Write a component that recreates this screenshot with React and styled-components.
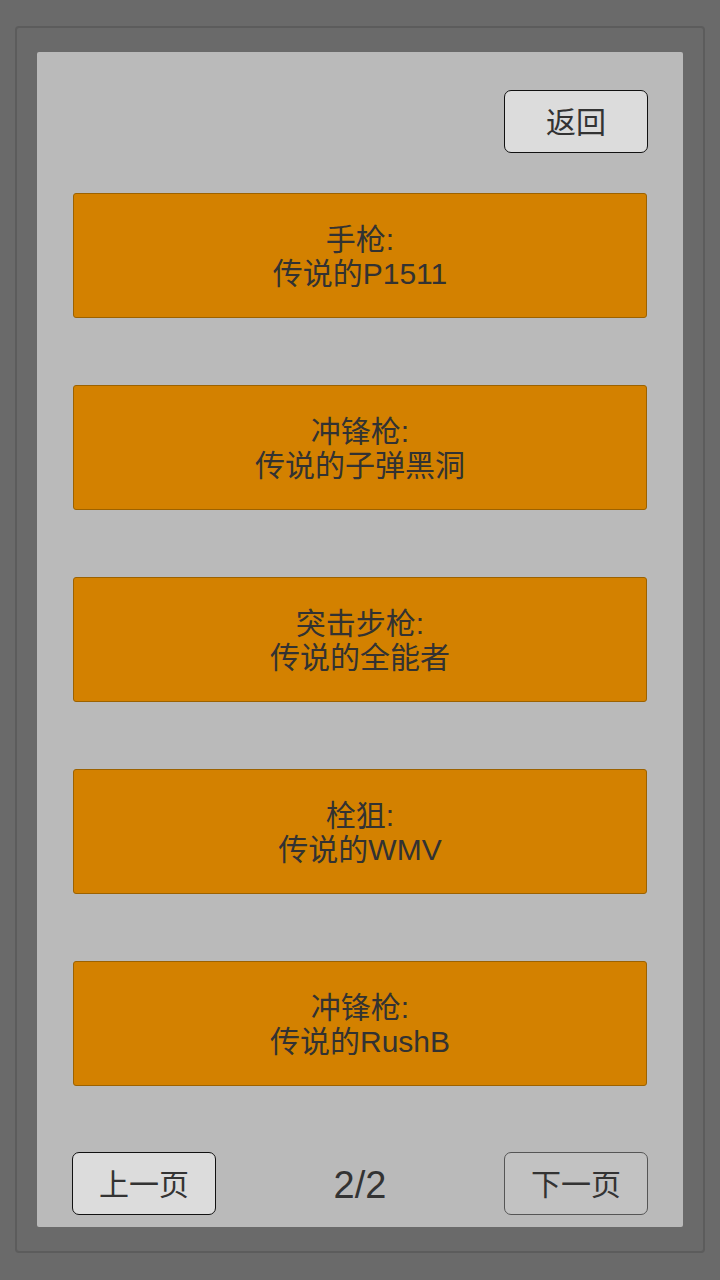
import styled, { createGlobalStyle } from 'styled-components'

const GlobalStyle = createGlobalStyle`
  html, body {
    margin: 0;
    padding: 0;
    background: #6a6a6a;
  }

  body {
    font-family: "Liberation Sans", "Noto Sans CJK SC", sans-serif;
  }
`

const weapons = [
  { type: '手枪:', name: '传说的P1511' },
  { type: '冲锋枪:', name: '传说的子弹黑洞' },
  { type: '突击步枪:', name: '传说的全能者' },
  { type: '栓狙:', name: '传说的WMV' },
  { type: '冲锋枪:', name: '传说的RushB' },
]

function App() {
  return (
    <>
      <GlobalStyle />
      <Screen>
        <Frame>
          <Panel>
            <Header>
              <Button>返回</Button>
            </Header>
            <List>
              {weapons.map((w, i) => (
                <Card key={i}>
                  <span>{w.type}</span>
                  <span>{w.name}</span>
                </Card>
              ))}
            </List>
            <Pager>
              <Button>上一页</Button>
              <PageNum>2/2</PageNum>
              <Button $disabled>下一页</Button>
            </Pager>
          </Panel>
        </Frame>
      </Screen>
    </>
  )
}

const Screen = styled.div`
  width: 720px;
  height: 1280px;
  box-sizing: border-box;
  padding: 26px 15px 27px 15px;
`

const Frame = styled.div`
  height: 100%;
  box-sizing: border-box;
  border: 2px solid #5c5c5c;
  border-radius: 4px;
  background: #6a6a6a;
  padding: 24px 20px 24px 20px;
`

const Panel = styled.div`
  height: 100%;
  box-sizing: border-box;
  background: #bababa;
  border-radius: 2px;
  padding: 38px 35px 12px 35px;
  display: flex;
  flex-direction: column;
`

const Header = styled.div`
  display: flex;
  justify-content: flex-end;
`

const Button = styled.div`
  width: 144px;
  height: 63px;
  box-sizing: border-box;
  padding-bottom: 4px;
  display: flex;
  align-items: center;
  justify-content: center;
  border: 1.5px solid ${p => (p.$disabled ? '#555' : '#111')};
  border-radius: 7px;
  background: ${p => (p.$disabled ? '#c2c2c2' : '#dcdcdc')};
  color: #333;
  font-size: 30px;
`

const List = styled.div`
  display: flex;
  flex-direction: column;
  gap: 67px;
  margin-top: 40px;
  padding: 0 1px;
`

const Card = styled.div`
  height: 125px;
  box-sizing: border-box;
  padding-top: 2px;
  background: #d38100;
  border: 1px solid #9c6200;
  border-radius: 3px;
  display: flex;
  flex-direction: column;
  align-items: center;
  justify-content: center;
  color: #323232;
  font-size: 30px;
  line-height: 34px;
`

const Pager = styled.div`
  margin-top: auto;
  display: flex;
  align-items: center;
  justify-content: space-between;
`

const PageNum = styled.div`
  padding-top: 3px;
  font-size: 38px;
  color: #333;
`

export default App
